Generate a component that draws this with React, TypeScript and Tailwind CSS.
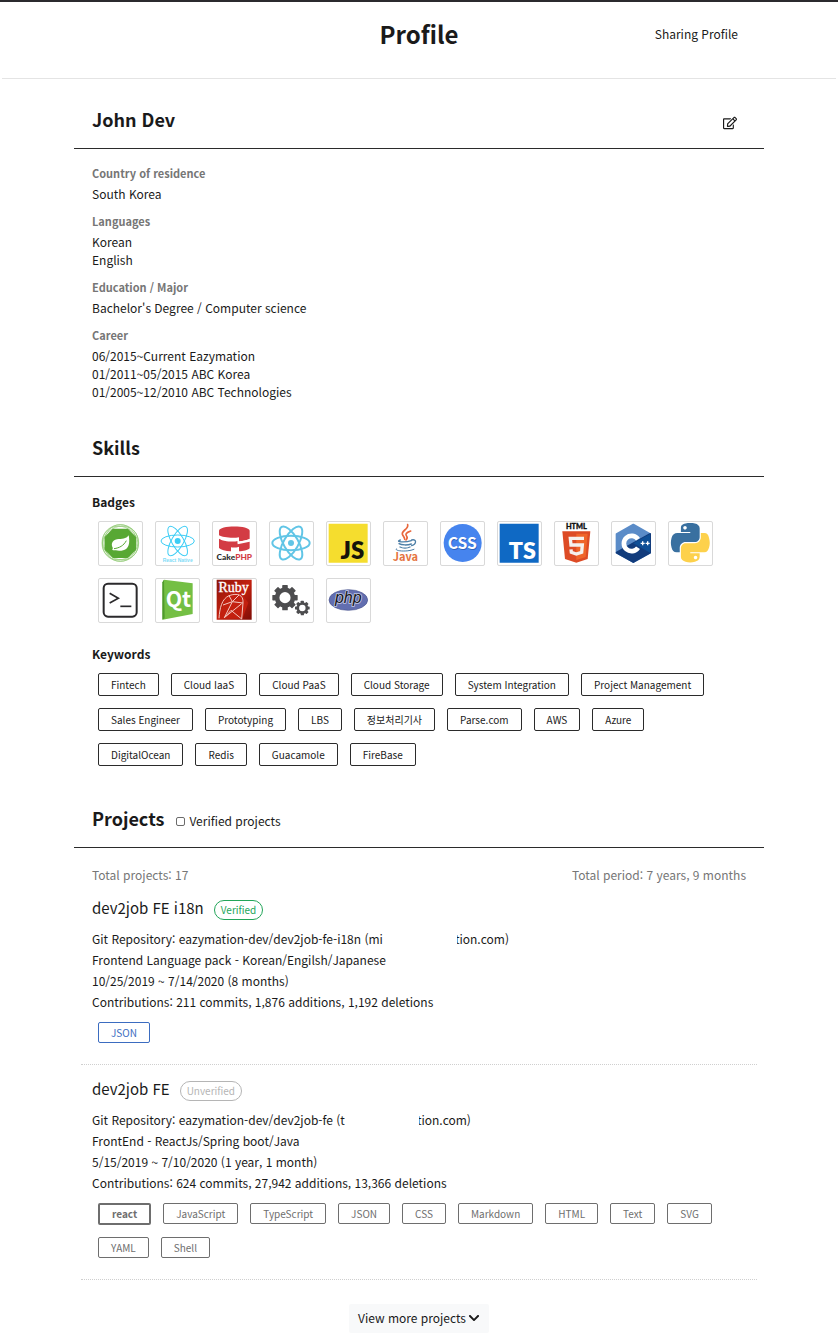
import { useState, ReactNode } from 'react';
import { FaChevronDown, FaRegEdit } from 'react-icons/fa';

interface Project {
  name: string;
  verified: boolean;
  repoStart: string;
  repoEnd: string;
  description: string;
  period: string;
  contributions: string;
  tags: string[];
  mainTag?: string;
}

const profile = [
  { label: 'Country of residence', values: ['South Korea'] },
  { label: 'Languages', values: ['Korean', 'English'] },
  { label: 'Education / Major', values: ["Bachelor's Degree / Computer science"] },
  {
    label: 'Career',
    values: ['06/2015~Current Eazymation', '01/2011~05/2015 ABC Korea', '01/2005~12/2010 ABC Technologies']
  }
];

const keywords = [
  'Fintech', 'Cloud IaaS', 'Cloud PaaS', 'Cloud Storage', 'System Integration', 'Project Management',
  'Sales Engineer', 'Prototyping', 'LBS', '정보처리기사', 'Parse.com', 'AWS', 'Azure',
  'DigitalOcean', 'Redis', 'Guacamole', 'FireBase'
];

const projects: Project[] = [
  {
    name: 'dev2job FE i18n',
    verified: true,
    repoStart: 'eazymation-dev/dev2job-fe-i18n (mi',
    repoEnd: 'tion.com)',
    description: 'Frontend Language pack - Korean/Engilsh/Japanese',
    period: '10/25/2019 ~ 7/14/2020 (8 months)',
    contributions: '211 commits, 1,876 additions, 1,192 deletions',
    tags: ['JSON']
  },
  {
    name: 'dev2job FE',
    verified: false,
    repoStart: 'eazymation-dev/dev2job-fe (t',
    repoEnd: 'tion.com)',
    description: 'FrontEnd - ReactJs/Spring boot/Java',
    period: '5/15/2019 ~ 7/10/2020 (1 year, 1 month)',
    contributions: '624 commits, 27,942 additions, 13,366 deletions',
    tags: ['react', 'JavaScript', 'TypeScript', 'JSON', 'CSS', 'Markdown', 'HTML', 'Text', 'SVG', 'YAML', 'Shell'],
    mainTag: 'react'
  }
];

function Atom({ cx, cy, rx, ry, color, stroke }: { cx: number; cy: number; rx: number; ry: number; color: string; stroke: number }) {
  return (
    <g fill="none" stroke={color} strokeWidth={stroke}>
      {[0, 60, 120].map((angle) => (
        <ellipse key={angle} cx={cx} cy={cy} rx={rx} ry={ry} transform={`rotate(${angle} ${cx} ${cy})`} />
      ))}
      <circle cx={cx} cy={cy} r={9} fill={color} stroke="none" />
    </g>
  );
}

function Gear({ cx, cy, r, teeth }: { cx: number; cy: number; r: number; teeth: number }) {
  return (
    <g transform={`translate(${cx} ${cy})`} fill="#4d4d4f">
      {Array.from({ length: teeth }, (_, i) => (
        <rect key={i} x={-r * 0.22} y={-r} width={r * 0.44} height={r * 0.5} rx={2} transform={`rotate(${(360 / teeth) * i})`} />
      ))}
      <circle r={r * 0.62} fill="none" stroke="#4d4d4f" strokeWidth={r * 0.36} />
    </g>
  );
}

// every logo is drawn on a 129 x 129 grid
const badges: { name: string; art: ReactNode }[] = [
  {
    name: 'Spring',
    art: (
      <>
        <g fill="none" stroke="#8fc973" strokeWidth="2">
          <circle cx="64" cy="63" r="55" />
          <ellipse cx="64" cy="63" rx="55" ry="49" transform="rotate(30 64 63)" />
          <ellipse cx="64" cy="63" rx="55" ry="49" transform="rotate(90 64 63)" />
          <ellipse cx="64" cy="63" rx="55" ry="49" transform="rotate(150 64 63)" />
        </g>
        <path d="M43 24h42l22 22v36l-22 22H43L21 82V46z" fill="#58a834" stroke="#58a834" strokeWidth="8" strokeLinejoin="round" />
        <path d="M89 40c4 20 3 45-22 46-12 1-18-1-25-1-3-1-3-5 0-6-7-12-3-24 12-27 15-2 27 0 35-12z" fill="#fff" />
        <path d="M45 80c16-2 29-9 37-24" fill="none" stroke="#58a834" strokeWidth="3" />
      </>
    )
  },
  {
    name: 'React Native',
    art: (
      <>
        <Atom cx={65} cy={57} rx={50} ry={18} color="#3ccdf5" stroke={3} />
        <text x="65" y="121" textAnchor="middle" fontSize="15" fontFamily="Liberation Sans" fontWeight="700" fill="#7fdcf7">React Native</text>
      </>
    )
  },
  {
    name: 'CakePHP',
    art: (
      <>
        <path d="M18 26c0-17 92-17 92 0v24c-7 5-20 7-32 8V46c-20 4-50 0-60-6z" fill="#d33c44" />
        <path d="M18 50c10 7 40 11 56 7v10l36-8v20c-5 6-20 9-32 9V74c-10 3-16 3-24 2v12c-17-1-30-4-36-10z" fill="#d33c44" />
        <path d="M18 46c12 7 36 10 58 6v10l34-8" fill="none" stroke="#fff" strokeWidth="4" />
        <text x="64" y="114" textAnchor="middle" fontSize="25" fontFamily="Lato" fontWeight="900" fill="#2d2d2d">
          Cake<tspan fill="#d33c44">PHP</tspan>
        </text>
      </>
    )
  },
  { name: 'React', art: <Atom cx={63} cy={63} rx={56} ry={22} color="#61c5e6" stroke={6} /> },
  {
    name: 'JavaScript',
    art: (
      <>
        <path d="M5 5h117v117H5z" fill="#f5dd2e" />
        <text x="76" y="112" textAnchor="middle" fontSize="72" fontFamily="Lato" fontWeight="800" fill="#15130a">JS</text>
      </>
    )
  },
  {
    name: 'Java',
    art: (
      <>
        <g fill="none" stroke="#e8673c" strokeWidth="5" strokeLinecap="round">
          <path d="M71 8c4 14-23 19-15 31 3 5 6 7 6 13" />
          <path d="M80 27c-14 5-17 10-12 16 3 4 2 7-2 11" />
        </g>
        <g fill="none" stroke="#4c7ea6" strokeWidth="4" strokeLinecap="round">
          <path d="M49 54c-18 6 14 8 33 2" />
          <path d="M45 65c8 5 26 5 37 1M48 75c8 4 22 4 30 0" />
          <path d="M83 54c16-4 15 12 0 17" />
          <path d="M38 80c-12 7 33 11 52 2" strokeWidth="3" />
        </g>
        <text x="64" y="118" textAnchor="middle" fontSize="33" fontFamily="Noto Sans CJK KR" fontWeight="700" fill="#e5743f">Java</text>
      </>
    )
  },
  {
    name: 'CSS',
    art: (
      <>
        <circle cx="65" cy="63" r="57" fill="#4684ee" />
        <text x="66" y="84" textAnchor="middle" fontSize="47" fontFamily="Noto Sans CJK KR" fontWeight="700" fill="#2f62bb">CSS</text>
        <text x="64" y="81" textAnchor="middle" fontSize="47" fontFamily="Noto Sans CJK KR" fontWeight="700" fill="#fff">CSS</text>
      </>
    )
  },
  {
    name: 'TypeScript',
    art: (
      <>
        <path d="M5 5h117v117H5z" fill="#0f69c4" />
        <text x="73" y="111" textAnchor="middle" fontSize="70" fontFamily="Lato" fontWeight="800" fill="#fff">TS</text>
      </>
    )
  },
  {
    name: 'HTML5',
    art: (
      <>
        <text x="64" y="21" textAnchor="middle" fontSize="22" fontFamily="Lato" fontWeight="900" fill="#111" stroke="#111">HTML</text>
        <path d="M22 28h84l-8 83-34 11-34-11z" fill="#dd4b25" />
        <path d="M64 35h34l-6 70-28 9z" fill="#ef652a" />
        <path d="M87 49H46l2 20h34l-2 22-16 5-15-5-1-9" fill="none" stroke="#f5f1ee" strokeWidth="10" />
      </>
    )
  },
  {
    name: 'C++',
    art: (
      <>
        <path d="M64 8l50 28v56l-50 28-50-28V36z" fill="#5b8cc8" stroke="#5b8cc8" strokeWidth="6" strokeLinejoin="round" />
        <path d="M114 36v56l-50 28-50-28z" fill="#123c7c" stroke="#123c7c" strokeWidth="6" strokeLinejoin="round" />
        <path d="M64 64l50-28v56z" fill="#0f4f96" />
        <path d="M78 52a23 23 0 1 0 0 25" fill="none" stroke="#fff" strokeWidth="14" />
        <path d="M86 64h12M92 58v12M101 64h12M107 58v12" stroke="#fff" strokeWidth="4" />
      </>
    )
  },
  {
    name: 'Python',
    art: (
      <g transform="translate(-9 1) scale(1.14)">
        <path
          d="M63.391 1.988c-4.222.02-8.252.379-11.8 1.007-10.45 1.846-12.346 5.71-12.346 12.837v9.411h24.693v3.137H29.977c-7.176 0-13.46 4.313-15.426 12.521-2.268 9.405-2.368 15.275 0 25.096 1.755 7.311 5.947 12.519 13.124 12.519h8.491V67.234c0-8.151 7.051-15.34 15.426-15.34h24.665c6.866 0 12.346-5.654 12.346-12.548V15.833c0-6.693-5.646-11.72-12.346-12.837-4.244-.706-8.645-1.027-12.866-1.008zM50.037 9.557c2.55 0 4.634 2.117 4.634 4.721 0 2.593-2.083 4.69-4.634 4.69-2.56 0-4.633-2.097-4.633-4.69-.001-2.604 2.073-4.721 4.633-4.721z"
          fill="#3970a0"
        />
        <path
          d="M91.682 28.38v10.966c0 8.5-7.208 15.655-15.426 15.655H51.591c-6.756 0-12.346 5.783-12.346 12.549v23.515c0 6.691 5.818 10.628 12.346 12.547 7.816 2.297 15.312 2.713 24.665 0 6.216-1.801 12.346-5.423 12.346-12.547v-9.412H63.938v-3.138h37.012c7.176 0 9.852-5.005 12.348-12.519 2.578-7.735 2.467-15.174 0-25.096-1.774-7.145-5.161-12.521-12.348-12.521h-9.268zM77.809 87.927c2.561 0 4.634 2.097 4.634 4.692 0 2.602-2.074 4.719-4.634 4.719-2.55 0-4.633-2.117-4.633-4.719 0-2.595 2.083-4.692 4.633-4.692z"
          fill="#fdd14b"
        />
      </g>
    )
  },
  {
    name: 'Shell',
    art: (
      <g fill="none" stroke="#2b2a2c">
        <rect x="14" y="14" width="99" height="99" rx="13" strokeWidth="6" />
        <path d="M32 43l26 15-26 14" strokeWidth="5" />
        <path d="M64 82h33" strokeWidth="5" />
      </g>
    )
  },
  {
    name: 'Qt',
    art: (
      <>
        <path d="M24 2l86 11v92l-90 17V10z" fill="#74bf44" />
        <path d="M24 2l-5 8v112l7-4z" fill="#4f9a2c" />
        <text x="67" y="84" textAnchor="middle" fontSize="64" fontFamily="Noto Sans CJK KR" fontWeight="700" fill="#fff">Qt</text>
      </>
    )
  },
  {
    name: 'Ruby',
    art: (
      <>
        <defs>
          <linearGradient id="ruby" x1="0" y1="0" x2="1" y2="1">
            <stop offset="0" stopColor="#8c1409" />
            <stop offset="0.5" stopColor="#c3200f" />
            <stop offset="1" stopColor="#7e0d06" />
          </linearGradient>
        </defs>
        <path d="M11 2h105v120H11z" fill="url(#ruby)" />
        <path d="M38 53l48-8 20 26-18 48-70 0z" fill="#c3200f" />
        <g fill="none" stroke="#f3c8c0" strokeWidth="3">
          <path d="M18 118c2-30 8-58 30-68 26-9 44-3 42 22l-4 48" />
          <path d="M30 78l28-10 32 4M58 68l-24 48 52-42M34 116l20-22 32 26M48 50l10 18 20-20" />
        </g>
        <text x="62" y="38" textAnchor="middle" fontSize="42" fontFamily="Liberation Serif" fill="#fff" stroke="#fff">Ruby</text>
      </>
    )
  },
  {
    name: 'Embedded',
    art: (
      <>
        <Gear cx={45} cy={56} r={38} teeth={8} />
        <Gear cx={97} cy={87} r={22} teeth={8} />
      </>
    )
  },
  {
    name: 'PHP',
    art: (
      <>
        <ellipse cx="64" cy="63" rx="58" ry="31" fill="#626eb0" stroke="#4b568f" strokeWidth="2" />
        <text
          x="64" y="73" textAnchor="middle" fontSize="48" fontFamily="Liberation Sans" fontStyle="italic"
          fill="#17171c" stroke="#c3c8e4" strokeWidth="5" paintOrder="stroke"
        >
          php
        </text>
      </>
    )
  }
];

function SectionHeader({ title, children }: { title: string; children?: ReactNode }) {
  return (
    <div className="flex items-center border-b border-[#2b2b2b] pb-4 pl-[18px] pr-[27px]">
      <h2 className="text-lg leading-[26px] font-bold">{title}</h2>
      {children}
    </div>
  );
}

function ProjectItem({ project }: { project: Project }) {
  const tagColor = project.verified ? 'border-[#3b6cc0] text-[#3b6cc0]' : 'border-[#6e6e6e] text-[#6e6e6e]';

  return (
    <li className="mx-[7px] border-b border-dotted border-[#cfcfcf] px-[11px] pt-3 pb-[21px]">
      <div className="flex items-center gap-2.5">
        <h3 className="text-[15px] leading-6">{project.name}</h3>
        <span
          className={`mt-1 rounded-full border px-1.5 text-[10px] leading-[18px] ${
            project.verified ? 'border-[#22a559] text-[#22a559]' : 'border-[#b5b5b5] text-[#b5b5b5]'
          }`}
        >
          {project.verified ? 'Verified' : 'Unverified'}
        </span>
      </div>
      <div className="mt-2 leading-[21px]">
        <p>
          Git Repository: {project.repoStart}
          {/* hidden part of the host name */}
          <span className="relative -mr-0.5 inline-block h-4 w-[74px] bg-white align-middle" />
          {project.repoEnd}
        </p>
        <p>{project.description}</p>
        <p>{project.period}</p>
        <p>Contributions: {project.contributions}</p>
      </div>
      <ul className="mt-2.5 flex flex-wrap items-start gap-3 px-1.5 text-[10px] leading-[19px]">
        {project.tags.map((tag) => (
          <li
            key={tag}
            className={`rounded-xs px-3 ${tagColor} ${tag === project.mainTag ? 'border-2 font-bold leading-[18px]' : 'border'}`}
          >
            {tag}
          </li>
        ))}
      </ul>
    </li>
  );
}

export default function App() {
  const [verifiedOnly, setVerifiedOnly] = useState(false);
  const visible = verifiedOnly ? projects.filter((p) => p.verified) : projects;

  return (
    <div
      lang="ko"
      className="border-t-2 border-[#2b2a2e] bg-white px-0.5 pb-[7px] font-['Noto_Sans_CJK_KR',sans-serif] text-xs leading-[18px] text-[#1a1a1a]"
    >
      <header className="border-b border-[#e4e4e4] pt-3.5 pb-[26px]">
        <div className="mx-[72px] grid grid-cols-3 items-center">
          <h1 className="col-start-2 text-center text-2xl leading-9 font-bold">Profile</h1>
          <a href="#share" className="justify-self-end pr-[26px]">Sharing Profile</a>
        </div>
      </header>

      <main className="mx-[72px]">
        <section className="pt-[27px]">
          <SectionHeader title="John Dev">
            <button type="button" aria-label="Edit profile" className="mt-2 ml-auto">
              <FaRegEdit className="size-3.5" />
            </button>
          </SectionHeader>
          <dl className="flex flex-col gap-2.5 px-[18px] pt-4">
            {profile.map((item) => (
              <div key={item.label}>
                <dt className="mb-1 text-[11px] leading-4 font-bold text-[#767676]">{item.label}</dt>
                {item.values.map((value) => (
                  <dd key={value}>{value}</dd>
                ))}
              </div>
            ))}
          </dl>
        </section>

        <section className="pt-[33px]">
          <SectionHeader title="Skills" />
          <div className="px-[18px] pt-4">
            <h3 className="font-bold">Badges</h3>
            <ul className="mt-2.5 flex flex-wrap gap-3 px-1.5">
              {badges.map((badge) => (
                <li key={badge.name} className="size-[45px] rounded-xs border border-[#d9d9d9]">
                  <svg viewBox="0 0 129 129" role="img" aria-label={badge.name} className="size-full">
                    {badge.art}
                  </svg>
                </li>
              ))}
            </ul>
            <h3 className="mt-[22px] font-bold">Keywords</h3>
            <ul className="mt-2.5 flex flex-wrap gap-3 px-1.5 text-[10px] leading-[21px]">
              {keywords.map((keyword) => (
                <li key={keyword} className="rounded-xs border border-[#2b2b2b] px-3">{keyword}</li>
              ))}
            </ul>
          </div>
        </section>

        <section className="pt-[39px]">
          <SectionHeader title="Projects">
            <label className="mt-1.5 ml-3 flex items-center gap-1">
              <input
                type="checkbox"
                checked={verifiedOnly}
                onChange={(e) => setVerifiedOnly(e.target.checked)}
                className="size-[9px] appearance-none rounded-xs border border-[#6b6b6b] checked:bg-[#3b6cc0]"
              />
              Verified projects
            </label>
          </SectionHeader>
          <div className="flex justify-between px-[18px] pt-[18px] text-[#767676]">
            <span>Total projects: 17</span>
            <span>Total period: 7 years, 9 months</span>
          </div>
          <ul>
            {visible.map((project) => (
              <ProjectItem key={project.name} project={project} />
            ))}
          </ul>
          <div className="mt-6 flex justify-center">
            <button type="button" className="flex items-center gap-0.5 rounded-xs bg-[#f8f9fa] px-[9px] pt-[5px] pb-1.5">
              View more projects
              <FaChevronDown className="size-3" />
            </button>
          </div>
        </section>
      </main>
    </div>
  );
}
